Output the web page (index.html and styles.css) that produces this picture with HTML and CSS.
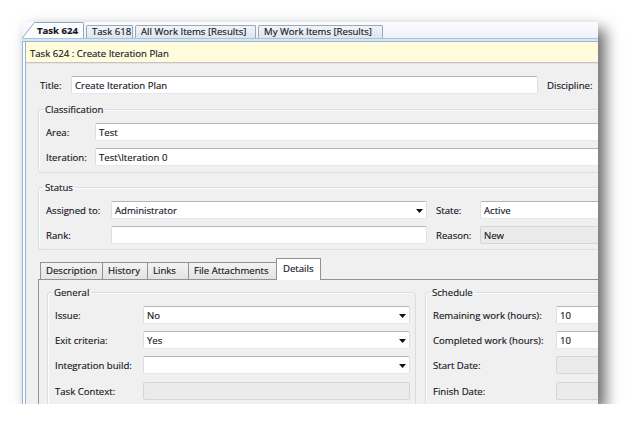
FILE: index.html
```html
<!DOCTYPE html>
<html>
<head>
<meta charset="utf-8">
<link rel="stylesheet" href="styles.css">
</head>
<body>
<div class="shot">
  <div class="doctabs">
    <svg class="slant" width="12" height="16" viewBox="0 0 12 16"><polygon points="0,16 12,1 12,16" fill="#fbfcfe"/><line x1="0" y1="16.3" x2="12" y2="1" stroke="#8fa8c4" stroke-width="1"/></svg>
    <div class="dtab active">Task 624</div>
    <div class="dtab w618">Task 618</div>
    <div class="dtab wall">All Work Items [Results]</div>
    <div class="dtab wmy">My Work Items [Results]</div>
  </div>
  <div class="dtline"></div>
  <div class="frame">
    <div class="frame-inner">
      <div class="caption">Task 624 : Create Iteration Plan</div>
      <div class="form">
        <div class="row title-row">
          <span class="lbl w-title">Title:</span>
          <div class="input w-titlein">Create Iteration Plan</div>
          <span class="lbl disc">Discipline:</span>
          <div class="input w-discin"></div>
        </div>

        <fieldset class="group cls">
          <legend>Classification</legend>
          <div class="rows">
            <div class="row"><span class="lbl w-area">Area:</span><div class="input w-wide">Test</div></div>
            <div class="row"><span class="lbl w-area">Iteration:</span><div class="input w-wide">Test\Iteration 0</div></div>
          </div>
        </fieldset>

        <fieldset class="group status">
          <legend>Status</legend>
          <div class="rows">
            <div class="row">
              <span class="lbl w-asg">Assigned to:</span>
              <div class="input combo w-asgin"><span>Administrator</span><svg class="arrow" width="7" height="4" viewBox="0 0 7 4"><polygon points="0,0 7,0 3.5,4" fill="#111"/></svg></div>
              <span class="lbl w-state">State:</span>
              <div class="input w-statein">Active</div>
            </div>
            <div class="row">
              <span class="lbl w-asg">Rank:</span>
              <div class="input w-asgin"></div>
              <span class="lbl w-state">Reason:</span>
              <div class="input disabled w-statein">New</div>
            </div>
          </div>
        </fieldset>

        <div class="wtabs">
          <div class="wtab w-desc">Description</div>
          <div class="wtab w-hist">History</div>
          <div class="wtab w-links">Links</div>
          <div class="wtab w-files">File Attachments</div>
          <div class="wtab active w-det">Details</div>
        </div>
        <div class="panel">
          <fieldset class="group general">
            <legend>General</legend>
            <div class="rows">
              <div class="row"><span class="lbl w-gen">Issue:</span><div class="input combo w-genin"><span>No</span><svg class="arrow" width="7" height="4" viewBox="0 0 7 4"><polygon points="0,0 7,0 3.5,4" fill="#111"/></svg></div></div>
              <div class="row"><span class="lbl w-gen">Exit criteria:</span><div class="input combo w-genin"><span>Yes</span><svg class="arrow" width="7" height="4" viewBox="0 0 7 4"><polygon points="0,0 7,0 3.5,4" fill="#111"/></svg></div></div>
              <div class="row"><span class="lbl w-gen">Integration build:</span><div class="input combo w-genin"><span></span><svg class="arrow" width="7" height="4" viewBox="0 0 7 4"><polygon points="0,0 7,0 3.5,4" fill="#111"/></svg></div></div>
              <div class="row last"><span class="lbl w-gen">Task Context:</span><div class="input disabled w-genin"></div></div>
            </div>
          </fieldset>
          <fieldset class="group schedule">
            <legend>Schedule</legend>
            <div class="rows">
              <div class="row"><span class="lbl w-sch">Remaining work (hours):</span><div class="input w-schin">10</div></div>
              <div class="row"><span class="lbl w-sch">Completed work (hours):</span><div class="input w-schin">10</div></div>
              <div class="row"><span class="lbl w-sch">Start Date:</span><div class="input disabled w-schin"></div></div>
              <div class="row last"><span class="lbl w-sch">Finish Date:</span><div class="input disabled w-schin"></div></div>
            </div>
          </fieldset>
        </div>
      </div>
    </div>
  </div>
</div>
</body>
</html>
```

FILE: styles.css
```css
* { box-sizing: border-box; }
html, body { margin: 0; background: #fff; }
body {
  padding: 22px 0 0 22px;
  font-family: "Open Sans", "Liberation Sans", sans-serif;
  font-size: 9.6px;
  line-height: 13px;
  color: #15151c;
  -webkit-text-stroke: 0.15px #15151c;
}
.shot {
  width: 576px;
  height: 382px;
  overflow: hidden;
  display: flex;
  flex-direction: column;
  background: #f0f0f0;
  box-shadow: 7px 7px 14px rgba(0,0,0,.6);
}

/* document tabs */
.doctabs {
  flex: none;
  height: 16px;
  display: flex;
  align-items: flex-end;
  background: linear-gradient(#fbfcfe, #eef2f9);
}
.slant { flex: none; display: block; }
.dtab {
  flex: none;
  height: 13px;
  margin-left: 2px;
  padding-left: 5px;
  line-height: 12px;
  white-space: nowrap;
  border: 1px solid #98a9be;
  border-bottom: none;
  border-radius: 2px 2px 0 0;
  background: linear-gradient(#f1f4f8, #dfe5ee);
}
.dtab.active {
  margin-left: 0;
  width: 50px;
  height: 16px;
  padding-left: 3px;
  line-height: 15px;
  border-left: none;
  border-color: #8fa8c4;
  border-radius: 0 2px 0 0;
  background: #fbfcfe;
  font-weight: 700;
}
.w618 { width: 47px; }
.wall { width: 121px; }
.wmy { width: 125px; }
.dtline {
  flex: none;
  height: 4px;
  border-top: 1px solid #a8c5de;
  border-bottom: 1px solid #9fb6ca;
  background: #d6e6f4;
}

/* frame */
.frame {
  flex: 1;
  display: flex;
  border-left: 1px solid #94b5d4;
  padding-left: 2px;
  background: #fbfdff;
}
.frame-inner {
  flex: 1;
  display: flex;
  flex-direction: column;
  border-left: 1px solid #94b5d4;
  background: #f0f0f0;
}
.caption {
  flex: none;
  height: 21px;
  padding: 5px 0 0 4px;
  background: #fffbdc;
  border-bottom: 1px solid #c4c4c4;
  box-shadow: 0 1px 0 #e4e4e4;
}
.form {
  width: 700px;
  padding: 13px 0 0 12px;
}

.row {
  display: flex;
  align-items: center;
  height: 18px;
}
.title-row { padding-left: 2px; }
.rows {
  display: flex;
  flex-direction: column;
  gap: 7px;
}
.lbl { flex: none; white-space: nowrap; }
.input {
  flex: none;
  height: 18px;
  padding: 2px 0 0 3px;
  line-height: 13px;
  background: #fff;
  border: 1px solid #dbdfe6;
  border-top-color: #b3b5bb;
  border-bottom-color: #e3e9ef;
  border-radius: 2px;
  white-space: nowrap;
  overflow: hidden;
}
.input.disabled {
  background: #ebebeb;
  border-color: #d6d6d6;
}
.combo {
  display: flex;
  align-items: flex-start;
  justify-content: space-between;
  padding-right: 3px;
}
.arrow { flex: none; margin-top: 5px; display: block; }

.w-title { width: 31px; }
.w-titlein { width: 467px; }
.disc { margin-left: 9px; width: 50px; }
.w-discin { width: 100px; margin-left: 4px; }

/* group boxes */
.group {
  margin: 0;
  padding: 7px 0 6px 7px;
  border: 1px solid #d5dfe5;
  border-radius: 3px;
  box-shadow: inset 1px 1px 0 #fbfbfb;
  min-width: 0;
}
.group legend {
  padding: 0 2px;
  margin-left: -3px;
  line-height: 13px;
}
.cls { margin-top: 9px; width: 620px; }
.status { margin-top: 8px; width: 620px; padding-bottom: 5px; }

.w-area { width: 49px; }
.w-wide { width: 560px; }
.w-asg { width: 65px; }
.w-asgin { width: 316px; }
.w-state { width: 44px; margin-left: 9px; }
.w-statein { width: 150px; }

/* work item tabs */
.wtabs {
  margin-top: 8px;
  padding-left: 2px;
  height: 21px;
  display: flex;
  align-items: flex-end;
}
.wtab {
  flex: none;
  height: 17px;
  padding: 1px 0 0 5px;
  line-height: 13px;
  white-space: nowrap;
  border: 1px solid #8f9296;
  border-bottom: none;
  margin-right: -1px;
  background: linear-gradient(#f3f3f3, #e3e3e3);
}
.wtab.active {
  height: 22px;
  margin-bottom: -1px;
  padding: 3px 0 0 6px;
  background: #fff;
  position: relative;
  z-index: 1;
}
.w-desc { width: 63px; }
.w-hist { width: 46px; }
.w-links { width: 42px; }
.w-files { width: 89px; }
.w-det { width: 45px; }

.panel {
  display: flex;
  align-items: flex-start;
  width: 640px;
  height: 140px;
  padding: 6px 0 0 8px;
  border: 1px solid #8f9296;
  background: #f0f0f0;
}
.general { width: 369px; padding-right: 5px; }
.schedule { width: 250px; margin-left: 9px; }
.general .rows, .schedule .rows { gap: 7px; }
.row.last { margin-top: 1px; }
.w-gen { width: 88px; }
.w-genin { width: 267px; }
.w-sch { width: 123px; }
.w-schin { width: 110px; }
```
